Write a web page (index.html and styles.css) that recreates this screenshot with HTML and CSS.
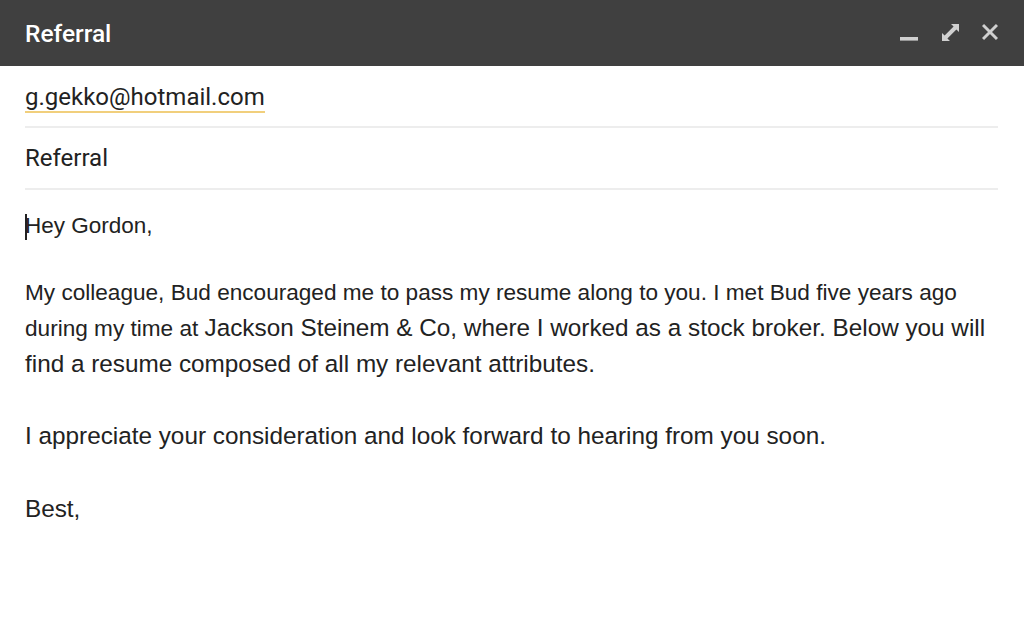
FILE: index.html
```html
<!DOCTYPE html>
<html>
<head>
<meta charset="utf-8">
<link rel="stylesheet" href="styles.css">
</head>
<body>
<div class="window">
  <div class="titlebar">
    <div class="title">Referral</div>
    <div class="controls">
      <svg class="ic" width="18" height="20" viewBox="0 0 18 20"><rect x="0" y="14" width="18" height="3.6" fill="#d0d0d0"/></svg>
      <svg class="ic" width="18" height="20" viewBox="0 0 18 20"><polygon fill="#d0d0d0" points="10,1 18,1 18,9 15.4,6.4 6.4,15.4 9,18 1,18 1,10 3.6,12.6 12.6,3.6"/></svg>
      <svg class="ic" width="16" height="20" viewBox="0 0 16 20"><path d="M1 2 L15 16 M15 2 L1 16" stroke="#d0d0d0" stroke-width="3"/></svg>
    </div>
  </div>
  <div class="fields">
    <div class="field to"><span class="chip">g.gekko@hotmail.com</span></div>
    <div class="field subject">Referral</div>
  </div>
  <div class="body">
    <p class="p greet"><span class="caret"></span>Hey Gordon,</p>
    <p class="p para"><span class="s">My colleague, Bud encouraged me to pass my resume along to you. I met Bud five years ago<br>during my time at </span><span class="l">Jackson Steinem &amp; Co, where I worked as a stock broker. Below you will<br>find a resume composed of all my relevant attributes.</span></p>
    <p class="p l">I appreciate your consideration and look forward to hearing from you soon.</p>
    <p class="p l">Best,</p>
  </div>
</div>
</body>
</html>
```

FILE: styles.css
```css
html, body { margin: 0; padding: 0; background: #fff; }
.window { width: 1024px; height: 623px; overflow: hidden; }
.titlebar {
  height: 66px; background: #404040; display: flex; align-items: center;
  justify-content: space-between; padding: 0 26px 0 25px; box-sizing: border-box;
}
.title { font-family: Roboto, "Liberation Sans", sans-serif; color: #fff; font-size: 24.5px; font-weight: 500; }
.controls { display: flex; gap: 23px; align-items: center; margin-top: 0; }
.ic { display: block; }
.fields { padding: 0 26px 0 25px; font-family: Roboto, "Liberation Sans", sans-serif; color: #222; font-size: 24px; }
.field { height: 61px; border-bottom: 2px solid #ededed; display: flex; align-items: center; box-sizing: border-box; }
.to { height: 62px; padding-top: 4px; }
.chip { border-bottom: 2px solid #f1cf7c; line-height: 27px; }
.subject { height: 62px; }
.body { padding: 18px 20px 0 25px; font-family: "Liberation Sans", Arial, sans-serif; color: #222; white-space: nowrap; }
.p { margin: 0 0 37px 0; font-size: 24.3px; line-height: 36px; }
.greet { font-size: 22.5px; line-height: 36px; position: relative; margin-bottom: 30px; }
.caret { position: absolute; left: 0; top: 6px; width: 1.5px; height: 26px; background: #222; }
.para { line-height: 35px; }
.s { font-size: 22.6px; }
.l { font-size: 24.3px; }
```
